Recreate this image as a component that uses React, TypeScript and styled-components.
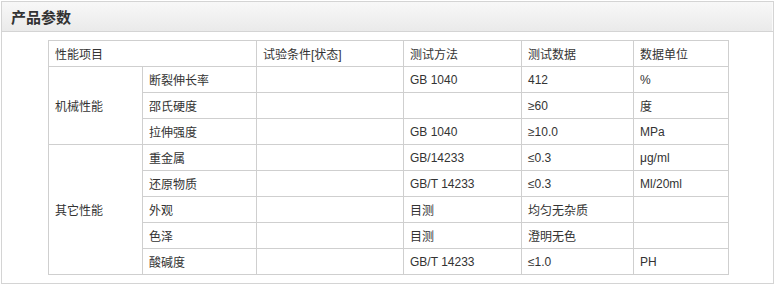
import React, {FC} from 'react';
import styled, {createGlobalStyle} from 'styled-components';

//region Data
interface Row {
    group?: string,
    span?: number,
    item: string,
    condition: string,
    method: string,
    value: string,
    unit: string,
}

const rows: Row[] = [
    {group: '机械性能', span: 3, item: '断裂伸长率', condition: '', method: 'GB 1040', value: '412', unit: '%'},
    {item: '邵氏硬度', condition: '', method: '', value: '≥60', unit: '度'},
    {item: '拉伸强度', condition: '', method: 'GB 1040', value: '≥10.0', unit: 'MPa'},
    {group: '其它性能', span: 6, item: '重金属', condition: '', method: 'GB/14233', value: '≤0.3', unit: 'μg/ml'},
    {item: '还原物质', condition: '', method: 'GB/T 14233', value: '≤0.3', unit: 'Ml/20ml'},
    {item: '外观', condition: '', method: '目测', value: '均匀无杂质', unit: ''},
    {item: '色泽', condition: '', method: '目测', value: '澄明无色', unit: ''},
    {item: '酸碱度', condition: '', method: 'GB/T 14233', value: '≤1.0', unit: 'PH'},
];

const widths = [94, 114, 147, 118, 112, 95];
//endregion

//region Styled
const Global = createGlobalStyle`
  body {
    margin: 0;
    background: #fff;
    font-family: "Liberation Sans", "Noto Sans CJK SC", sans-serif;
    color: #333;
  }
`;

const Panel = styled.section`
  margin: 1px 0 0 1px;
  width: 771px;
  height: 281px;
  border: 1px solid #d4d4d4;
  box-sizing: content-box;
`;

const Header = styled.h3`
  margin: 0;
  height: 29px;
  padding-left: 9px;
  display: flex;
  align-items: center;
  font-size: 15px;
  font-weight: bold;
  color: #333;
  background: linear-gradient(#f8f8f8, #eaeaea);
  border-bottom: 1px solid #d4d4d4;
  box-shadow: inset -1px 0 0 #fafafa;
`;

const Body = styled.div`
  padding: 8px 0 0 46px;
`;

const Table = styled.table`
  border-collapse: collapse;
  table-layout: fixed;
  width: 680px;
  font-size: 12px;
`;

const Cell = styled.td`
  height: 25px;
  padding: 0 0 0 6px;
  border: 1px solid #cfcfcf;
  color: #333;
  vertical-align: middle;
  white-space: nowrap;
`;
//endregion

const App: FC = () => {
    return (
        <>
            <Global/>
            <Panel>
                <Header>产品参数</Header>
                <Body>
                    <Table>
                        <colgroup>
                            {widths.map((w, i) => <col key={i} style={{width: w}}/>)}
                        </colgroup>
                        <tbody>
                        <tr>
                            <Cell colSpan={2}>性能项目</Cell>
                            <Cell>试验条件[状态]</Cell>
                            <Cell>测试方法</Cell>
                            <Cell>测试数据</Cell>
                            <Cell>数据单位</Cell>
                        </tr>
                        {rows.map((row, index) => (
                            <tr key={index}>
                                {row.group && <Cell rowSpan={row.span}>{row.group}</Cell>}
                                <Cell>{row.item}</Cell>
                                <Cell>{row.condition}</Cell>
                                <Cell>{row.method}</Cell>
                                <Cell>{row.value}</Cell>
                                <Cell>{row.unit}</Cell>
                            </tr>
                        ))}
                        </tbody>
                    </Table>
                </Body>
            </Panel>
        </>
    );
};

export default App;
